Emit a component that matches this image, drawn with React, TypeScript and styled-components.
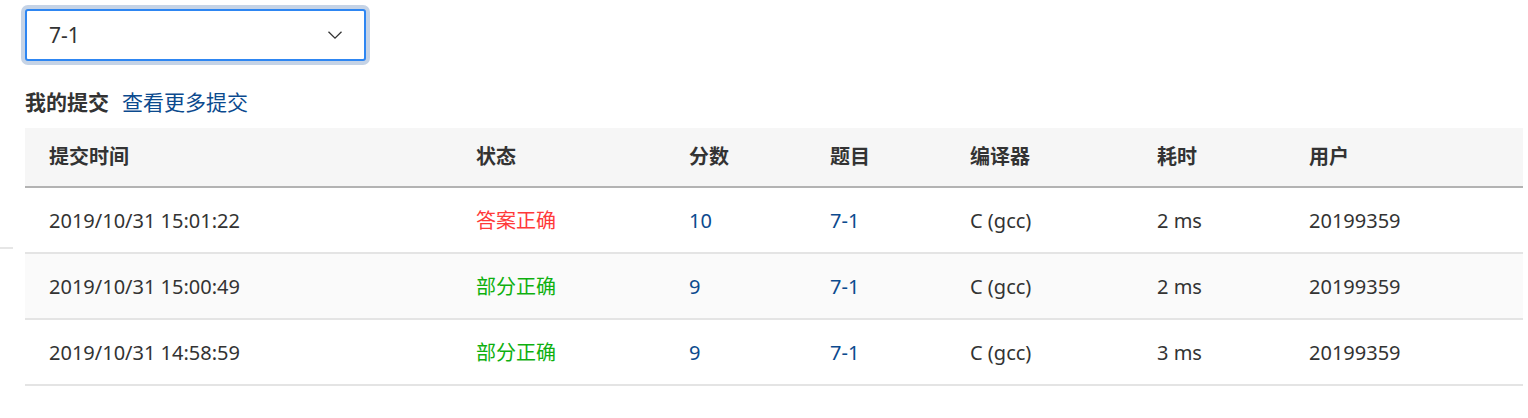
import React from "react";
import styled, { createGlobalStyle } from "styled-components";

const Global = createGlobalStyle`
  html, body { margin: 0; padding: 0; background: #fff; }
  body {
    font-family: "Noto Sans", "Noto Sans CJK SC", sans-serif;
    color: #333;
  }
`;

const Page = styled.div`
  position: relative;
  padding: 9px 5px 0 25px;
  height: 418px;
  box-sizing: border-box;
  overflow: hidden;
  &::before {
    content: "";
    position: absolute;
    left: 0;
    top: 247px;
    width: 13px;
    height: 2px;
    background: #e6e6e6;
  }
`;

const Select = styled.div`
  box-sizing: border-box;
  width: 341px;
  height: 52px;
  border: 2px solid #2e86f2;
  border-radius: 3px;
  box-shadow: 0 0 0 4px #c5d3e6;
  display: flex;
  align-items: center;
  justify-content: space-between;
  padding: 0 21px 0 22px;
  font-size: 21px;
  color: #333;
  background: #fff;
`;

const Chevron = styled.svg`
  width: 16px;
  height: 16px;
  display: block;
`;

const Heading = styled.div`
  margin-top: 27px;
  display: flex;
  align-items: baseline;
  gap: 13px;
  line-height: 28px;
  font-size: 21px;
`;

const HeadingTitle = styled.span`
  font-weight: 700;
  color: #333;
`;

const HeadingLink = styled.a`
  color: #0b4a8e;
  text-decoration: none;
`;

const Table = styled.table`
  margin-top: 12px;
  width: 100%;
  table-layout: fixed;
  border-collapse: separate;
  border-spacing: 0;
  font-size: 20px;
`;

const Th = styled.th`
  text-align: left;
  font-weight: 700;
  background: #f6f6f6;
  padding: 15px 0 15px 24px;
  line-height: 28px;
  border-bottom: 2px solid #b3b3b3;
  color: #333;
  white-space: nowrap;
`;

const Tr = styled.tr<{ $alt?: boolean }>`
  background: ${(p) => (p.$alt ? "#fafafa" : "#fff")};
`;

const Td = styled.td<{ $tone?: "red" | "green" | "link" }>`
  padding: 19px 0 17px 24px;
  line-height: 28px;
  border-bottom: 2px solid #e4e4e4;
  white-space: nowrap;
  color: ${(p) =>
    p.$tone === "red"
      ? "#ff3a3a"
      : p.$tone === "green"
      ? "#0fb00f"
      : p.$tone === "link"
      ? "#0b4a8e"
      : "#333"};
`;

const NextHeading = styled.div`
  margin-top: 28px;
  font-size: 21px;
  font-weight: 700;
  line-height: 28px;
  color: #333;
`;

const widths = [427, 213, 141, 140, 187, 152, 238];
const headers = ["提交时间", "状态", "分数", "题目", "编译器", "耗时", "用户"];

type Row = {
  time: string;
  status: string;
  ok: boolean;
  score: string;
  problem: string;
  compiler: string;
  cost: string;
  user: string;
};

const rows: Row[] = [
  { time: "2019/10/31 15:01:22", status: "答案正确", ok: true, score: "10", problem: "7-1", compiler: "C (gcc)", cost: "2 ms", user: "20199359" },
  { time: "2019/10/31 15:00:49", status: "部分正确", ok: false, score: "9", problem: "7-1", compiler: "C (gcc)", cost: "2 ms", user: "20199359" },
  { time: "2019/10/31 14:58:59", status: "部分正确", ok: false, score: "9", problem: "7-1", compiler: "C (gcc)", cost: "3 ms", user: "20199359" },
];

export default function App() {
  return (
    <>
      <Global />
      <Page>
        <Select>
          <span>7-1</span>
          <Chevron viewBox="0 0 16 16" fill="none">
            <path d="M1.5 4.8 L8 11.2 L14.5 4.8" stroke="#333" strokeWidth="1.3" />
          </Chevron>
        </Select>
        <Heading>
          <HeadingTitle>我的提交</HeadingTitle>
          <HeadingLink href="#">查看更多提交</HeadingLink>
        </Heading>
        <Table>
          <colgroup>
            {widths.map((w, i) => (
              <col key={i} style={{ width: w }} />
            ))}
          </colgroup>
          <thead>
            <tr>
              {headers.map((h) => (
                <Th key={h}>{h}</Th>
              ))}
            </tr>
          </thead>
          <tbody>
            {rows.map((r, i) => (
              <Tr key={i} $alt={i % 2 === 1}>
                <Td>{r.time}</Td>
                <Td $tone={r.ok ? "red" : "green"}>{r.status}</Td>
                <Td $tone="link">{r.score}</Td>
                <Td $tone="link">{r.problem}</Td>
                <Td>{r.compiler}</Td>
                <Td>{r.cost}</Td>
                <Td>{r.user}</Td>
              </Tr>
            ))}
          </tbody>
        </Table>
        <NextHeading>提交代码</NextHeading>
      </Page>
    </>
  );
}
